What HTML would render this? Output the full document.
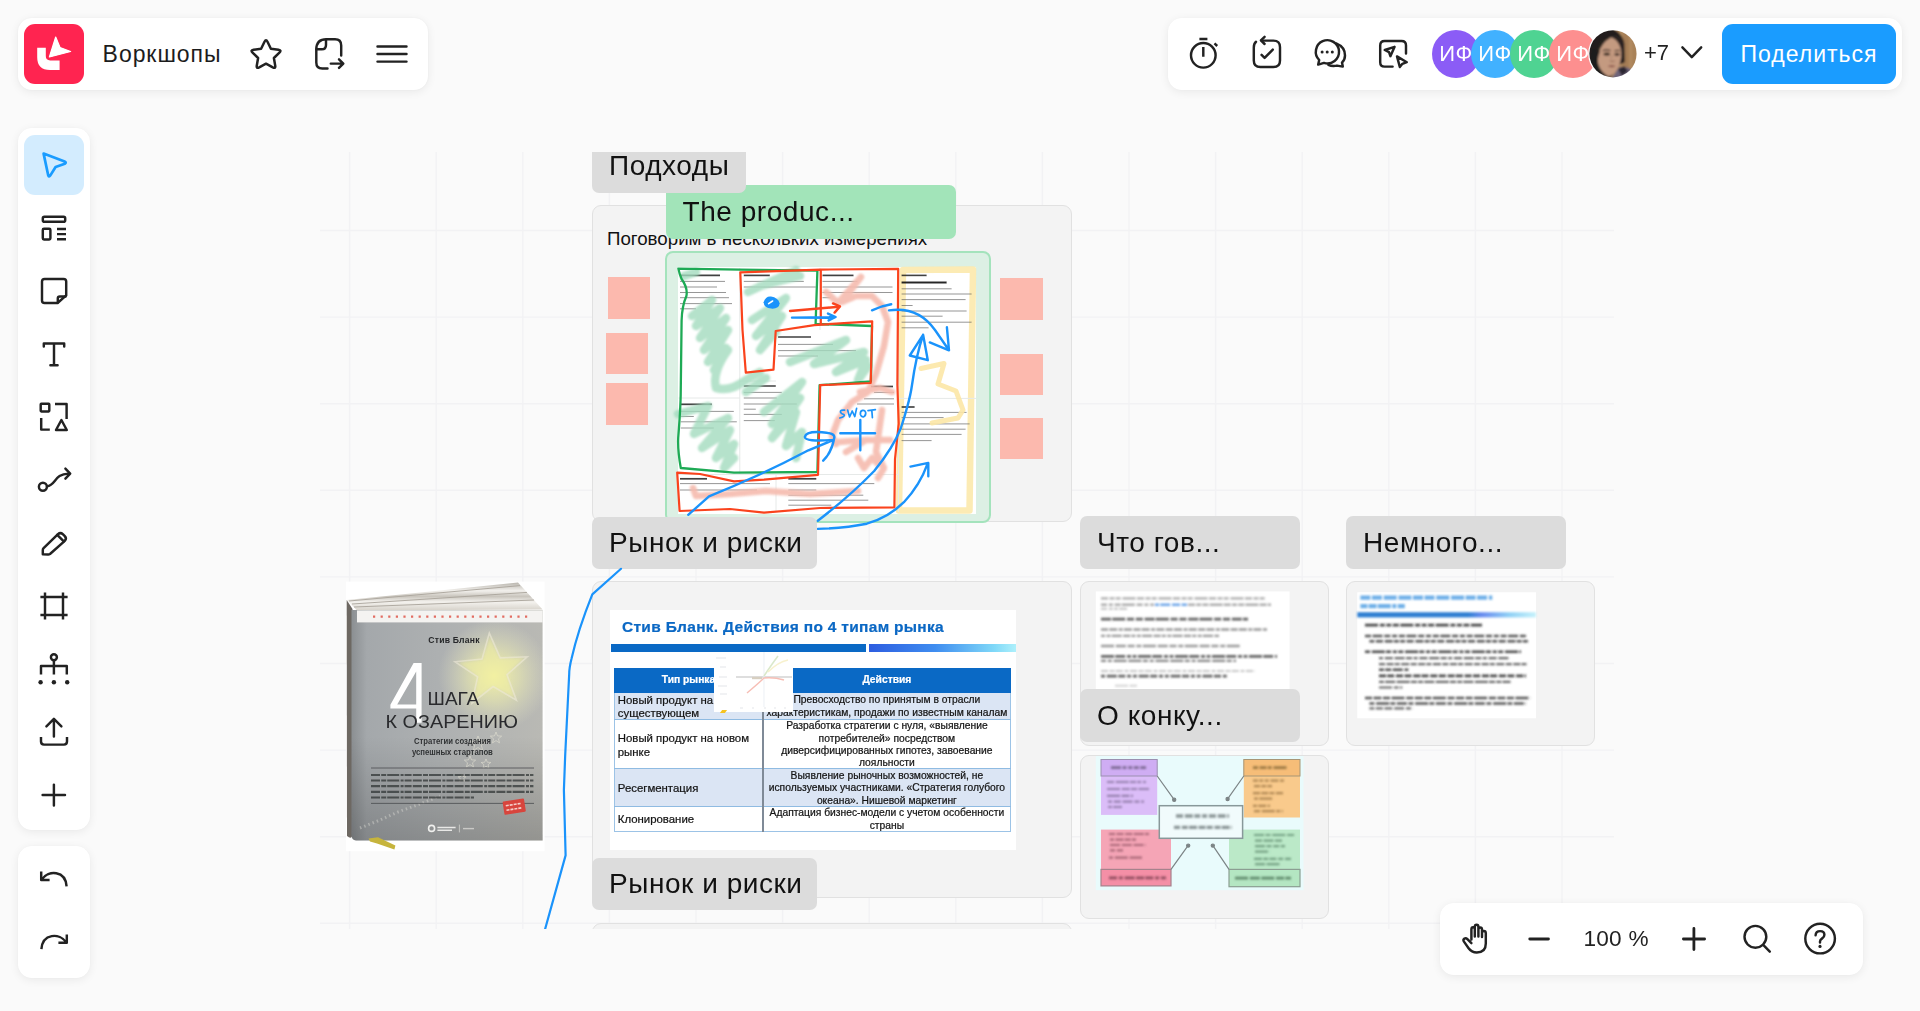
<!DOCTYPE html>
<html lang="ru">
<head>
<meta charset="utf-8">
<title>Воркшопы</title>
<style>
*{box-sizing:border-box;margin:0;padding:0}
html,body{width:1920px;height:1011px;overflow:hidden;background:#fafafa;font-family:"Liberation Sans",sans-serif;color:#1f1f1f}
.abs{position:absolute}
.panel{position:absolute;background:#fff;border-radius:14px;box-shadow:0 2px 10px rgba(0,0,0,.07),0 0 2px rgba(0,0,0,.04)}
svg{position:absolute;overflow:visible}
.ic{fill:none;stroke:#222;stroke-width:2.45;stroke-linecap:round;stroke-linejoin:round}
#canvas{position:absolute;left:320px;top:152px;width:1294px;height:777px;overflow:hidden}
#board{position:absolute;left:-320px;top:-152px;width:1920px;height:1011px}
.lbl{position:absolute;background:#dcdcdc;border-radius:7px;font-size:28px;letter-spacing:.55px;color:#111;padding-left:17px;white-space:nowrap;overflow:hidden}
.frame{position:absolute;background:#f3f3f3;border:1.5px solid #e1e1e1;border-radius:9px}
.pk{position:absolute;background:#fcb9ae;width:43px;height:43px}
.av{position:absolute;top:30px;width:48px;height:48px;border-radius:50%;color:#fff;font-size:22px;line-height:48px;text-align:center;letter-spacing:.5px}
</style>
</head>
<body>

<!-- ================= CANVAS ================= -->
<div id="canvas"><div id="board">
<svg width="1920" height="1011" style="left:0;top:0" viewBox="0 0 1920 1011"><g stroke="#f2f2f4" stroke-width="1.4"><path d="M349.6 152V929"/><path d="M436.2 152V929"/><path d="M522.8 152V929"/><path d="M609.4 152V929"/><path d="M696.0 152V929"/><path d="M782.6 152V929"/><path d="M869.2 152V929"/><path d="M955.8 152V929"/><path d="M1042.4 152V929"/><path d="M1129.0 152V929"/><path d="M1215.6 152V929"/><path d="M1302.2 152V929"/><path d="M1388.8 152V929"/><path d="M1475.4 152V929"/><path d="M1562.0 152V929"/><path d="M320 230.5H1614"/><path d="M320 317.1H1614"/><path d="M320 403.7H1614"/><path d="M320 490.3H1614"/><path d="M320 576.9H1614"/><path d="M320 663.5H1614"/><path d="M320 750.1H1614"/><path d="M320 836.7H1614"/><path d="M320 923.3H1614"/></g></svg>

<!-- frames -->
<div class="frame" style="left:592px;top:205px;width:480px;height:317px"></div>
<div class="frame" style="left:592px;top:581px;width:480px;height:317px"></div>
<div class="frame" style="left:1080px;top:581px;width:249px;height:165px"></div>
<div class="frame" style="left:1346px;top:581px;width:249px;height:165px"></div>
<div class="frame" style="left:1080px;top:755px;width:249px;height:164px"></div>
<div class="frame" style="left:592px;top:923px;width:480px;height:100px"></div>
<!--F1S--><div class="abs" style="left:607px;top:228px;font-size:18.7px;line-height:22px;color:#111;white-space:nowrap">Поговорим в нескольких измерениях</div>
<div class="pk" style="left:607.8px;top:277.4px;width:42.6px;height:41.6px"></div>
<div class="pk" style="left:605.6px;top:332.6px;width:42.6px;height:41.6px"></div>
<div class="pk" style="left:605.6px;top:383.4px;width:42.6px;height:41.6px"></div>
<div class="pk" style="left:1000.3px;top:278.2px;width:42.6px;height:41.6px"></div>
<div class="pk" style="left:1000.3px;top:353.6px;width:42.6px;height:41.6px"></div>
<div class="pk" style="left:1000.3px;top:417.8px;width:42.6px;height:41.6px"></div>
<div class="abs" style="left:665px;top:251px;width:326px;height:271.5px;border:2.2px solid #a4e3bc;background:#dcf0e4;border-radius:8px"></div>
<svg width="1920" height="1011" style="left:0;top:0" viewBox="0 0 1920 1011"><defs><filter id="b1" x="-5%" y="-5%" width="110%" height="110%"><feGaussianBlur stdDeviation=".45"/></filter><filter id="b2" x="-5%" y="-5%" width="110%" height="110%"><feGaussianBlur stdDeviation=".8"/></filter></defs><rect x="678" y="267" width="298" height="247" fill="#fff"/><path d="M903 270 L973 269.5 L969.5 510.5 L899 510.5 Z" fill="none" stroke="#fce9ae" stroke-width="6.5" stroke-linejoin="round" opacity=".92"/><path d="M739.8 268V474 M820 268V330 M898.5 268V512 M678.5 398H739.8 M739.8 381H776 M898.5 398.4H976 M678 474.5H898 M776 474.5V512" stroke="#e6e9e8" stroke-width="1" fill="none"/><g filter="url(#b1)"><path d="M680.0 275.4h40.0" stroke="#222" stroke-width="1.7" opacity="0.85" fill="none"/><path d="M680.0 281.4h45.0M680.0 287.0h37.0M680.0 292.5h46.0M680.0 297.7h49.0M680.0 303.6h52.0M680.0 308.8h16.0" stroke="#555" stroke-width="1.0" opacity="0.62" fill="none"/><path d="M743.8 275.4h26.0" stroke="#222" stroke-width="1.7" opacity="0.85" fill="none"/><path d="M743.8 281.4h60.0M743.8 287.0h72.0" stroke="#555" stroke-width="1.0" opacity="0.62" fill="none"/><path d="M822.5 275.4h31.0" stroke="#222" stroke-width="1.7" opacity="0.85" fill="none"/><path d="M822.5 281.4h35.0M822.5 287.0h70.0M822.5 292.5h70.0M822.5 297.7h8.0" stroke="#555" stroke-width="1.0" opacity="0.62" fill="none"/><path d="M901.6 275.4h25.0" stroke="#222" stroke-width="1.6" opacity="0.85" fill="none"/><path d="M901.6 282.6h45.0" stroke="#111" stroke-width="2" opacity="0.9" fill="none"/><path d="M901.6 288.8h50.0M901.6 294.0h70.0M901.6 299.6h64.0M901.6 305.5h11.0M901.6 311.0h65.0M901.6 316.2h41.0M901.6 322.2h70.0M901.6 327.8h27.0" stroke="#555" stroke-width="1.0" opacity="0.62" fill="none"/><path d="M778.0 337.0h33.0" stroke="#222" stroke-width="1.7" opacity="0.85" fill="none"/><path d="M778.0 344.4h55.0M778.0 350.6h78.0M778.0 356.0h40.0" stroke="#555" stroke-width="1.0" opacity="0.62" fill="none"/><path d="M743.8 386.0h32.0" stroke="#222" stroke-width="1.7" opacity="0.85" fill="none"/><path d="M743.8 392.4h38.0M743.8 398.0h33.0M743.8 404.0h53.0M743.8 409.2h12.0M743.8 414.4h38.0M743.8 420.6h31.0" stroke="#555" stroke-width="1.0" opacity="0.62" fill="none"/><path d="M680.8 404.3h31.0" stroke="#222" stroke-width="1.7" opacity="0.85" fill="none"/><path d="M680.8 411.4h53.0M680.8 416.5h13.0M680.8 421.8h56.0M680.8 428.0h33.0" stroke="#555" stroke-width="1.0" opacity="0.62" fill="none"/><path d="M871.0 386.5h22.0" stroke="#222" stroke-width="1.7" opacity="0.85" fill="none"/><path d="M874.0 392.4h20.0M864.0 398.8h30.0M857.0 404.0h37.0" stroke="#555" stroke-width="1.0" opacity="0.62" fill="none"/><path d="M680.0 478.8h27.0" stroke="#222" stroke-width="1.7" opacity="0.85" fill="none"/><path d="M680.0 483.6h90.0M680.0 490.0h77.0" stroke="#555" stroke-width="1.0" opacity="0.62" fill="none"/><path d="M788.3 478.8h28.0" stroke="#222" stroke-width="1.7" opacity="0.85" fill="none"/><path d="M788.3 483.6h86.0M788.3 490.0h28.0M788.3 495.2h75.0M788.3 500.2h80.0M788.3 505.2h43.0" stroke="#555" stroke-width="1.0" opacity="0.62" fill="none"/><path d="M901.6 407.0h13.0" stroke="#222" stroke-width="1.7" opacity="0.85" fill="none"/><path d="M901.6 412.4h65.0M901.6 417.6h42.0M901.6 423.9h68.0M901.6 429.2h64.0M901.6 434.4h60.0M901.6 440.6h30.0" stroke="#555" stroke-width="1.0" opacity="0.62" fill="none"/></g><g fill="none" stroke="#a3dbbe" stroke-width="8.5" stroke-linecap="round" stroke-linejoin="round" opacity=".8" filter="url(#b2)"><path d="M684 276 L696 272 M692 316 L712 300 L696 326 L720 308 L700 338 L726 318 L704 350 L728 330 L708 362 L726 348 L714 370"/><path d="M728 350 Q712 372 716 388 Q730 392 746 380 L760 372"/><path d="M748 292 L796 270 M760 286 L800 276 M752 320 L786 298 L756 336 L782 316 L760 350 L776 332"/><path d="M790 362 L846 340 L814 364 L864 352 L836 372 L866 360 L858 380 L868 366"/><path d="M746 392 L766 378 M764 412 L802 382 L772 424 L800 398 L772 438 L796 412 L786 446 L802 432 L796 458"/><path d="M678 414 L708 406 L694 434 L728 418 L702 448 L730 430 L716 458 L734 444 L724 468 L734 458"/></g><g fill="none" stroke="#f5bbae" stroke-width="6.5" stroke-linecap="round" stroke-linejoin="round" opacity=".9" filter="url(#b2)"><path d="M826 292 L838 303 L861 277 L842 302 L856 296 L872 296 L882 306 L888 322 L884 346 L876 374 L868 392 L852 402 L838 420 L832 436 L836 444"/><path d="M838 442 L866 440 L890 440 M846 452 L866 440 M882 410 L876 452 L884 468 L878 478 M858 458 L864 468 L872 458 L878 464"/><path d="M693 488 L696 496 L730 494 L766 491 L810 494 L858 491"/><path d="M860 392 L880 388 L892 392"/></g><path d="M921 368.5 L944 363.5 L938 384 L956 391 L963 410 L958 418 L932 423" fill="none" stroke="#fce7a6" stroke-width="5" stroke-linecap="round" stroke-linejoin="round" opacity=".9"/><path d="M678.4 268.6 L740 269.6 L817.4 270.6 L815.6 324 L872 326 L870.9 381.4 L819.6 385.2 L817.4 472 L734 472.6 L680.8 468 Q677.6 450 678.2 438 Q680.4 410 680.7 395 L681.6 320.5 Q682 306 686.4 296 Q688 288 681.6 279 Q679.4 274 678.4 268.6 Z" fill="none" stroke="#1eaa55" stroke-width="2.3" stroke-linejoin="round"/><path d="M740.3 272.4 L742.5 330 L745.8 372.6 L773.5 369.6 L775.7 331 L814.3 325.1 L872.2 321.4 L870.7 383 L820.2 385.2 L818 474.8 L764 479.6 L734 481.4 L700 474 L677.2 472.6 L679.6 511 L730 509 L764 512.6 L820 508 L894.4 507.4 L895 459 L898.7 423.6 L897.4 385 L898.2 268.8 L820.6 269.6 L740.3 272.4 Z M820.8 269 V325" fill="none" stroke="#fa431d" stroke-width="2.2" stroke-linejoin="round"/><g fill="none" stroke="#1a93fb" stroke-width="2.4" stroke-linecap="round" stroke-linejoin="round"><path d="M790 311 L838.5 306.8 M833 303.4 L840 306.4 L834.6 312.6" stroke="#fa431d"/><path d="M792 317.6 L834.6 317.2 M828 313.6 L835.6 317 L828.6 320.4"/><path d="M872 310.3 Q881 306 891.2 304.3"/><path d="M889 310.4 Q918 306 935 330 L949 350.3 M929.8 342.4 L949 350.3 L946.9 327.3"/><path d="M817.8 520.8 Q850 496 874.2 471 Q893 448 900.9 428 Q910 400 912 385 Q916 356 923.1 334.8 L909.8 355.5 L927.8 360.2 L923.1 334.8"/><path d="M817.8 528.9 Q846 528 866.8 523.7 Q888 518 903.9 502.2 Q920 485 927.6 463.6 M910.5 466.6 L928.3 462.9 L928.3 476.2"/><path d="M688.2 514.8 L709 496.3 Q760 476 808.4 450.3 L833.6 439.9 Q805 442 804.8 437 Q806 431 822 432.2 Q835 433 834.3 437.5 Q832 452 823.2 460.7"/><path d="M840.3 433.2 H875.1 M860.3 419.9 V450.3"/><path d="M844.6 410.2 Q840.2 409.6 840.4 412 Q841 414 844 414.6 Q845.6 416.6 839.8 418 M847.6 410 L849.6 417 L852.2 411 L854.8 416.6 L856.6 408.4 M862.6 410.4 Q860 411 860.4 414.4 Q861.4 417.4 864 416.6 Q866.2 415.4 865.6 412.2 Q864.8 410 862.6 410.4 M868 410.6 L875.4 409.6 M871.8 410.2 L872.4 417.6" stroke-width="1.7"/></g><path d="M763.6 302.2 Q765.6 296 771 296.6 Q778 297.6 779.6 303.2 Q779.2 309 771.4 308.6 Q764 308 763.6 302.2 Z" fill="#1a93fb"/><path d="M768.6 303.6 L772.6 301" stroke="#fff" stroke-width="1.6" stroke-linecap="round"/></svg>
<div class="lbl" style="left:666px;top:185px;width:289.5px;height:53.5px;line-height:53px;background:#a2e4b9;padding-left:16.5px">The produc...</div><!--F1E-->
<!--F2S--><div class="abs" style="left:610.4px;top:610.4px;width:405.4px;height:239.4px;background:#fff;filter:blur(.45px);overflow:hidden;-webkit-text-stroke:.22px">
<div class="abs" style="left:11.6px;top:8px;font-size:15.5px;letter-spacing:.3px;font-weight:bold;color:#0b68c4;white-space:nowrap;line-height:18px">Стив Бланк. Действия по 4 типам рынка</div>
<div class="abs" style="left:0.6px;top:34px;width:255px;height:7.6px;background:#0a69c5"></div>
<div class="abs" style="left:258.4px;top:34px;width:147px;height:7.6px;background:linear-gradient(90deg,#2d5de0 0%,#3f8df0 45%,#7fd8f8 85%,#aef0fb 100%)"></div>
<!-- table -->
<div class="abs" style="left:3.6px;top:57.4px;width:396.8px;height:164px;border:1px solid #9cc3e6;border-top:none"></div>
<div class="abs" style="left:3.6px;top:57.4px;width:396.8px;height:25px;background:#0a69c5"></div>
<div class="abs" style="left:4.2px;top:82.4px;width:395.6px;height:26.8px;background:#dbe5f4"></div>
<div class="abs" style="left:4.2px;top:158px;width:395.6px;height:38px;background:#dbe5f4"></div>
<div class="abs" style="left:3.6px;top:108.8px;width:396.8px;height:1.2px;background:#8fbbe2"></div>
<div class="abs" style="left:3.6px;top:157.6px;width:396.8px;height:1.2px;background:#8fbbe2"></div>
<div class="abs" style="left:3.6px;top:195.4px;width:396.8px;height:1.2px;background:#8fbbe2"></div>
<div class="abs" style="left:152px;top:82.4px;width:1.3px;height:139px;background:#7f8a97"></div>
<div class="abs" style="left:3.6px;top:63.6px;width:149px;text-align:center;font-size:10.3px;font-weight:bold;color:#fff;line-height:12px">Тип рынка</div>
<div class="abs" style="left:153px;top:63.6px;width:247px;text-align:center;font-size:10.3px;font-weight:bold;color:#fff;line-height:12px">Действия</div>
<div class="abs" style="left:7.4px;top:83.8px;font-size:11.4px;line-height:12.7px;color:#141414;white-space:nowrap">Новый продукт на<br>существующем</div>
<div class="abs" style="left:7.4px;top:121.4px;font-size:11.4px;line-height:13.8px;color:#141414;white-space:nowrap">Новый продукт на новом<br>рынке</div>
<div class="abs" style="left:7.4px;top:171.6px;font-size:11.4px;line-height:13px;color:#141414;white-space:nowrap">Ресегментация</div>
<div class="abs" style="left:7.4px;top:202.8px;font-size:11.4px;line-height:13px;color:#141414;white-space:nowrap">Клонирование</div>
<div class="abs" style="left:153px;top:84px;width:247px;text-align:center;font-size:10.3px;line-height:12.4px;color:#141414;white-space:nowrap">Превосходство по принятым в отрасли<br>характеристикам, продажи по известным каналам</div>
<div class="abs" style="left:153px;top:110px;width:247px;text-align:center;font-size:10.3px;line-height:12.35px;color:#141414;white-space:nowrap">Разработка стратегии с нуля, «выявление<br>потребителей» посредством<br>диверсифицированных гипотез, завоевание<br>лояльности</div>
<div class="abs" style="left:153px;top:159.4px;width:247px;text-align:center;font-size:10.3px;line-height:12.5px;color:#141414;white-space:nowrap">Выявление рыночных возможностей, не<br>используемых участниками. «Стратегия голубого<br>океана». Нишевой маркетинг</div>
<div class="abs" style="left:153px;top:197px;width:247px;text-align:center;font-size:10.3px;line-height:12.4px;color:#141414;white-space:nowrap">Адаптация бизнес-модели с учетом особенности<br>страны</div>
</div>
<svg width="80" height="62" style="left:714px;top:651.6px" viewBox="0 0 80 62">
<rect x="0" y="0" width="79" height="60" fill="#fff"/>
<g fill="none" stroke-width="1" opacity=".55">
<path d="M22 25 H78" stroke="#888"/><path d="M50 0 V55" stroke="#dde3ee"/>
<path d="M33 41 Q46 30 50 26 Q60 25 70 28" stroke="#f08a7a" stroke-width="1.4"/>
<path d="M50 24 Q58 12 64 4" stroke="#bcd7a0" stroke-width="1.6"/>
<path d="M54 20 Q64 10 74 8" stroke="#f1e6a6" stroke-width="1.6"/>
<path d="M38 26 H48" stroke="#b8a890" stroke-width="2.4"/>
<path d="M2 6h10M6 15h6M5 25h8M4 34h9M6 42h7" stroke="#c8ccd2" stroke-width=".9"/>
<path d="M26 56h3M38 56h2M50 56h2M60 56h2M70 56h2" stroke="#c8ccd2" stroke-width=".9"/>
</g></svg>
<div class="abs" style="left:721.4px;top:710.4px;width:5px;height:3px;background:#f6c320;transform:skewX(-35deg)"></div><!--F2E-->
<!--F3S--><svg width="1920" height="1011" style="left:0;top:0" viewBox="0 0 1920 1011"><defs>
<filter id="g1" x="-5%" y="-20%" width="110%" height="140%"><feGaussianBlur stdDeviation="1.1"/></filter>
<filter id="g2" x="-5%" y="-5%" width="110%" height="110%"><feGaussianBlur stdDeviation=".9"/></filter>
<filter id="g3" x="-5%" y="-5%" width="110%" height="110%"><feGaussianBlur stdDeviation=".6"/></filter>
<linearGradient id="f4b" x1="0" y1="0" x2="1" y2="0"><stop offset="0" stop-color="#2f7fd2"/><stop offset=".62" stop-color="#2f7fd2"/><stop offset=".7" stop-color="#6a8cf0"/><stop offset=".85" stop-color="#8fd0f5"/><stop offset="1" stop-color="#c6f2fb"/></linearGradient>
</defs><rect x="1095.8" y="591.4" width="193.8" height="110" fill="#fff"/><g filter="url(#g1)" fill="none"><path d="M1101 598.4H1265" stroke="#8a8a8a" stroke-width="2.4" opacity="0.7" stroke-dasharray="7 1.5 5 1.2 5 1.8 13 1.5"/><path d="M1101 604.8H1154" stroke="#8a8a8a" stroke-width="2.4" opacity="0.7" stroke-dasharray="6 1.8 4 1.8 6 1.2 13 1.8"/><path d="M1155 604.8H1187" stroke="#4a90e2" stroke-width="2.4" opacity="0.8" stroke-dasharray="4 1.2 10 1.8 8 1.5 10 1.2"/><path d="M1188 604.8H1271" stroke="#8a8a8a" stroke-width="2.4" opacity="0.7" stroke-dasharray="7 1.2 5 1.2 6 1.2 13 1.2"/><path d="M1101 608.8H1127" stroke="#999" stroke-width="2" opacity="0.6" stroke-dasharray="6 1.8 4 1.2 4 1.2 13 1.2"/><path d="M1101 619.1H1248" stroke="#4a4a4a" stroke-width="2.6" opacity="0.85" stroke-dasharray="10 1.2 13 1.8 7 1.8 7 1.8"/><path d="M1101 629.5H1267" stroke="#7a7a7a" stroke-width="2.4" opacity="0.75" stroke-dasharray="7 1.2 8 1.5 4 1.2 8 1.5"/><path d="M1101 635.9H1219" stroke="#7a7a7a" stroke-width="2.4" opacity="0.75" stroke-dasharray="4 1.5 4 1.2 10 1.5 7 1.2"/><path d="M1101 646H1241" stroke="#7a7a7a" stroke-width="2.4" opacity="0.75" stroke-dasharray="13 1.8 10 1.8 7 1.8 5 1.5"/><path d="M1101 656.4H1277" stroke="#4e4e4e" stroke-width="2.8" opacity="0.85" stroke-dasharray="13 1.2 10 1.8 4 1.5 4 1.5"/><path d="M1101 660.9H1236" stroke="#6a6a6a" stroke-width="2.4" opacity="0.8" stroke-dasharray="5 1.8 4 1.8 13 1.8 13 1.5"/><path d="M1101 671H1255" stroke="#9a9a9a" stroke-width="2.2" opacity="0.55" stroke-dasharray="7 1.5 5 1.2 7 1.8 4 1.5"/><path d="M1101 676.2H1227" stroke="#4e4e4e" stroke-width="2.8" opacity="0.85" stroke-dasharray="4 1.8 10 1.5 7 1.8 4 1.8"/><path d="M1115 685.8H1137" stroke="#aaa" stroke-width="2" opacity="0.5" stroke-dasharray="13 1.5 10 1.5 7 1.2 5 1.2"/></g><rect x="1357.3" y="592.3" width="178.7" height="126" fill="#fff"/><g filter="url(#g2)" fill="none"><path d="M1360.4 597.6H1492.3" stroke="#4a9be2" stroke-width="4.2" opacity="0.8" stroke-dasharray="10 1.5 10 1.8 13 1.8 13 1.5"/><path d="M1360.4 606.2H1405" stroke="#4a9be2" stroke-width="4.2" opacity="0.8" stroke-dasharray="7 1.2 8 1.2 13 1.5 4 1.5"/><rect x="1357.3" y="612.2" width="178.7" height="5.2" fill="url(#f4b)"/><path d="M1365 625.2H1482" stroke="#2a2a2a" stroke-width="2.8" opacity="0.85" stroke-dasharray="13 1.8 5 1.5 5 1.5 6 1.5"/><path d="M1365 635.9H1526" stroke="#333" stroke-width="2.5" opacity="0.82" stroke-dasharray="6 1.5 10 1.8 6 1.8 5 1.8"/><path d="M1369.4 641.3H1528.7" stroke="#333" stroke-width="2.5" opacity="0.82" stroke-dasharray="5 1.5 7 1.8 8 1.2 5 1.2"/><path d="M1365 651.7H1521" stroke="#2a2a2a" stroke-width="2.6" opacity="0.85" stroke-dasharray="5 1.8 13 1.2 5 1.8 4 1.5"/><path d="M1379 658.1H1509" stroke="#444" stroke-width="2.2" opacity="0.8" stroke-dasharray="4 1.8 8 1.8 10 1.5 6 1.5"/><path d="M1379 664.1H1527" stroke="#444" stroke-width="2.2" opacity="0.8" stroke-dasharray="6 1.5 7 1.2 5 1.5 8 1.5"/><path d="M1379 669.7H1408.4" stroke="#333" stroke-width="2.6" opacity="0.85" stroke-dasharray="5 1.2 6 1.5 10 1.8 5 1.8"/><path d="M1379 675.9H1526" stroke="#333" stroke-width="2.8" opacity="0.88" stroke-dasharray="7 1.2 7 1.8 7 1.5 7 1.8"/><path d="M1379 681.8H1510.5" stroke="#444" stroke-width="2.2" opacity="0.8" stroke-dasharray="5 1.2 10 1.5 13 1.2 6 1.2"/><path d="M1379 687.5H1402.3" stroke="#444" stroke-width="2.2" opacity="0.8" stroke-dasharray="13 1.8 5 1.2 13 1.2 13 1.8"/><path d="M1365 697.9H1530.4" stroke="#333" stroke-width="2.5" opacity="0.82" stroke-dasharray="7 1.5 8 1.5 7 1.5 13 1.8"/><path d="M1369.4 703.4H1526" stroke="#333" stroke-width="2.5" opacity="0.82" stroke-dasharray="5 1.8 13 1.2 5 1.5 10 1.5"/><path d="M1369.4 708.3H1412.7" stroke="#444" stroke-width="2.3" opacity="0.8" stroke-dasharray="5 1.5 7 1.5 8 1.8 10 1.8"/></g><g filter="url(#g3)"><rect x="1095.8" y="756" width="207.7" height="134.2" fill="#e9fbfc"/><rect x="1101" y="759.5" width="56.2" height="55.4" fill="#dbbdf8"/><rect x="1101" y="759.5" width="56.2" height="16.5" fill="#cfadf3" stroke="#9b8fb0" stroke-width="1"/><rect x="1243.8" y="759.5" width="56.2" height="58" fill="#f9ca8c"/><rect x="1243.8" y="759.5" width="56.2" height="16.5" fill="#f6bd78" stroke="#a89574" stroke-width="1"/><rect x="1101" y="829.6" width="70" height="56.3" fill="#f5a5b6"/><rect x="1101" y="869.4" width="70" height="16.5" fill="#f48fa6" stroke="#a6828c" stroke-width="1.2"/><rect x="1229" y="829.6" width="71" height="57.1" fill="#bbe9c8"/><rect x="1229" y="869.4" width="71" height="17.3" fill="#b4e6c2" stroke="#8b9e92" stroke-width="1.2"/><rect x="1159.3" y="805.7" width="83.3" height="32.6" fill="#f1fbfc" stroke="#88989a" stroke-width="1.5"/><g stroke="#7c8486" stroke-width="1.2" fill="#7c8486"><path d="M1157.2 776 L1174.5 800.2 M1243.8 776 L1227.3 799.3 M1171 869.4 L1188.4 845.2 M1229 869.4 L1212.6 845.2" fill="none"/><circle cx="1174.2" cy="799.8" r="1.6"/><circle cx="1227.6" cy="799" r="1.6"/><circle cx="1188.2" cy="845.6" r="1.6"/><circle cx="1212.8" cy="845.6" r="1.6"/></g></g><g filter="url(#g2)" fill="none"><path d="M1111 767.6H1146" stroke="#6b5a80" stroke-width="2.6" opacity="0.8" stroke-dasharray="10 1.5 4 1.8 4 1.5 5 1.5"/><path d="M1253 767.6H1287" stroke="#8a6a3a" stroke-width="2.6" opacity="0.8" stroke-dasharray="5 1.5 7 1.2 4 1.8 13 1.5"/><path d="M1107 782H1146" stroke="#7a6890" stroke-width="2.2" opacity="0.7" stroke-dasharray="7 1.8 13 1.2 6 1.2 4 1.8"/><path d="M1107 789H1149" stroke="#7a6890" stroke-width="2.2" opacity="0.7" stroke-dasharray="13 1.8 8 1.2 6 1.5 13 1.8"/><path d="M1107 795.8H1133" stroke="#7a6890" stroke-width="2.2" opacity="0.7" stroke-dasharray="13 1.5 8 1.5 8 1.2 6 1.5"/><path d="M1108 801.6H1144" stroke="#7a6890" stroke-width="2.2" opacity="0.7" stroke-dasharray="4 1.8 7 1.8 10 1.8 5 1.8"/><path d="M1108 807H1122" stroke="#7a6890" stroke-width="2.2" opacity="0.7" stroke-dasharray="4 1.2 10 1.8 4 1.8 10 1.5"/><path d="M1253 780.6H1284" stroke="#94703e" stroke-width="2.2" opacity="0.7" stroke-dasharray="5 1.2 4 1.5 4 1.8 8 1.5"/><path d="M1254 786.2H1272" stroke="#94703e" stroke-width="2.2" opacity="0.7" stroke-dasharray="6 1.2 5 1.2 7 1.5 5 1.2"/><path d="M1253 793.2H1283" stroke="#94703e" stroke-width="2.2" opacity="0.7" stroke-dasharray="7 1.2 7 1.2 5 1.5 13 1.2"/><path d="M1254 798.6H1273" stroke="#94703e" stroke-width="2.2" opacity="0.7" stroke-dasharray="4 1.2 13 1.8 7 1.5 6 1.2"/><path d="M1253 805.8H1270" stroke="#94703e" stroke-width="2.2" opacity="0.7" stroke-dasharray="4 1.2 8 1.5 6 1.2 8 1.2"/><path d="M1254 811.2H1283" stroke="#94703e" stroke-width="2.2" opacity="0.7" stroke-dasharray="6 1.8 13 1.5 4 1.5 10 1.5"/><path d="M1109 834H1149" stroke="#8a5060" stroke-width="2.2" opacity="0.7" stroke-dasharray="6 1.5 7 1.8 7 1.5 10 1.2"/><path d="M1110 839.6H1136" stroke="#8a5060" stroke-width="2.2" opacity="0.7" stroke-dasharray="4 1.5 8 1.2 6 1.2 5 1.5"/><path d="M1110 845H1146" stroke="#8a5060" stroke-width="2.2" opacity="0.7" stroke-dasharray="10 1.8 10 1.8 10 1.8 13 1.5"/><path d="M1110 850.4H1123" stroke="#8a5060" stroke-width="2.2" opacity="0.7" stroke-dasharray="5 1.8 13 1.5 7 1.8 7 1.5"/><path d="M1109 857.6H1142" stroke="#8a5060" stroke-width="2.2" opacity="0.7" stroke-dasharray="4 1.8 13 1.8 13 1.5 8 1.2"/><path d="M1254 835H1295" stroke="#5a8568" stroke-width="2.2" opacity="0.7" stroke-dasharray="10 1.5 5 1.8 13 1.8 7 1.2"/><path d="M1255 840.6H1282" stroke="#5a8568" stroke-width="2.2" opacity="0.7" stroke-dasharray="7 1.5 10 1.5 7 1.2 10 1.8"/><path d="M1255 846.2H1285" stroke="#5a8568" stroke-width="2.2" opacity="0.7" stroke-dasharray="10 1.5 5 1.8 6 1.5 8 1.5"/><path d="M1255 851.6H1270" stroke="#5a8568" stroke-width="2.2" opacity="0.7" stroke-dasharray="13 1.8 6 1.8 8 1.2 5 1.2"/><path d="M1254 858.8H1291" stroke="#5a8568" stroke-width="2.2" opacity="0.7" stroke-dasharray="8 1.2 5 1.2 7 1.8 5 1.8"/><path d="M1255 864.2H1280" stroke="#5a8568" stroke-width="2.2" opacity="0.7" stroke-dasharray="10 1.5 13 1.5 8 1.5 10 1.5"/><path d="M1109 877.8H1166" stroke="#7a4050" stroke-width="2.8" opacity="0.8" stroke-dasharray="8 1.8 4 1.8 10 1.5 8 1.2"/><path d="M1235 878.2H1291" stroke="#4d7559" stroke-width="2.8" opacity="0.8" stroke-dasharray="13 1.8 10 1.5 13 1.8 8 1.2"/><path d="M1176 816H1229" stroke="#6a7476" stroke-width="3.4" opacity="0.75" stroke-dasharray="7 1.8 8 1.5 6 1.8 5 1.8"/><path d="M1174 827.4H1232" stroke="#6a7476" stroke-width="3.4" opacity="0.75" stroke-dasharray="6 1.8 6 1.2 8 1.5 7 1.2"/></g></svg><!--F3E-->
<!--BOOKS--><svg width="1920" height="1011" style="left:0;top:0" viewBox="0 0 1920 1011"><defs>
<linearGradient id="bkc" x1="0" y1="0" x2="1" y2="0"><stop offset="0" stop-color="#8b8f92"/><stop offset=".08" stop-color="#a4a8ab"/><stop offset=".45" stop-color="#adb0b1"/><stop offset="1" stop-color="#b9b9b4"/></linearGradient>
<linearGradient id="bkd" x1="0" y1="0" x2="0" y2="1"><stop offset="0" stop-color="#000" stop-opacity="0"/><stop offset=".55" stop-color="#000" stop-opacity="0"/><stop offset="1" stop-color="#000" stop-opacity=".2"/></linearGradient>
<radialGradient id="bkg" cx="494" cy="676" r="56" gradientUnits="userSpaceOnUse"><stop offset="0" stop-color="#f6f4a4" stop-opacity=".95"/><stop offset=".45" stop-color="#eeeeb0" stop-opacity=".6"/><stop offset="1" stop-color="#e8e8c8" stop-opacity="0"/></radialGradient>
<linearGradient id="bkp" x1="0" y1="0" x2="0" y2="1"><stop offset="0" stop-color="#b9b5ad"/><stop offset=".3" stop-color="#f2f0ec"/><stop offset=".5" stop-color="#c9c5bd"/><stop offset=".7" stop-color="#f4f2ee"/><stop offset="1" stop-color="#d6d2ca"/></linearGradient>
<filter id="bb" x="-5%" y="-5%" width="110%" height="110%"><feGaussianBlur stdDeviation=".5"/></filter>
<filter id="bb2" x="-20%" y="-20%" width="140%" height="140%"><feGaussianBlur stdDeviation="1.6"/></filter>
<clipPath id="bkclip"><rect x="351.5" y="622" width="191.1" height="218.4"/></clipPath></defs><rect x="346" y="581.6" width="198.6" height="269.6" fill="#fff"/><g filter="url(#bb)"><path d="M347 600 L518 582.4 L542.6 609.6 L357 610.4 Z" fill="url(#bkp)"/><path d="M349 601 L520 585.6 M352 604 L527 592.4 M354 607 L534 600" stroke="#a9a49b" stroke-width=".9" fill="none"/><path d="M346.7 600 L352.5 609 V834 Q352 840.4 347 836 Z" fill="#6d6762"/><path d="M351.5 610 H542.6 V840.4 H356 Q351.5 840.4 351.5 835 Z" fill="url(#bkc)"/><path d="M351.5 610 H542.6 V840.4 H356 Q351.5 840.4 351.5 835 Z" fill="url(#bkd)"/><circle cx="494" cy="676" r="56" fill="url(#bkg)" clip-path="url(#bkclip)"/><path d="M489.6 636.1 L499.7 658.7 L524.5 657.9 L506.1 674.5 L514.5 697.8 L493.0 685.5 L473.5 700.7 L478.6 676.4 L458.0 662.5 L482.7 659.9Z" fill="#f3f1a0" opacity=".55" filter="url(#bb2)"/><path d="M489.3 633.1 L500.2 657.9 L527.2 656.8 L507.0 674.7 L516.4 700.1 L493.1 686.5 L471.9 703.2 L477.6 676.8 L455.1 661.8 L482.0 659.1Z" fill="none" stroke="#efe9d8" stroke-width="1.6" opacity=".6"/><path d="M478.0 736.0 L480.1 741.2 L485.6 741.5 L481.3 745.1 L482.7 750.5 L478.0 747.5 L473.3 750.5 L474.7 745.1 L470.4 741.5 L475.9 741.2Z M496.0 732.0 L497.5 735.9 L501.7 736.1 L498.5 738.8 L499.5 742.9 L496.0 740.6 L492.5 742.9 L493.5 738.8 L490.3 736.1 L494.5 735.9Z M470.0 756.0 L471.5 759.9 L475.7 760.1 L472.5 762.8 L473.5 766.9 L470.0 764.6 L466.5 766.9 L467.5 762.8 L464.3 760.1 L468.5 759.9Z M486.0 759.0 L487.3 762.2 L490.8 762.5 L488.1 764.7 L488.9 768.0 L486.0 766.2 L483.1 768.0 L483.9 764.7 L481.2 762.5 L484.7 762.2Z M462.0 774.0 L463.1 776.5 L465.8 776.8 L463.7 778.6 L464.4 781.2 L462.0 779.8 L459.6 781.2 L460.3 778.6 L458.2 776.8 L460.9 776.5Z" fill="none" stroke="#e6e4d6" stroke-width="1" opacity=".55"/><path d="M360 828 L380 820 L398 812 L420 804 L440 796" stroke="#d9d9d2" stroke-width="3" stroke-dasharray="1.5 3" opacity=".45" fill="none"/><rect x="357" y="610.4" width="185.6" height="12" fill="#f4f3f1"/><path d="M373 616.6 H532" stroke="#e0564a" stroke-width="2.2" stroke-dasharray="2.2 5.4" opacity=".85"/></g><g font-family="Liberation Sans, sans-serif" filter="url(#bb)"><text x="454" y="643" font-size="8.6" font-weight="bold" fill="#26282a" text-anchor="middle" letter-spacing=".2">Стив Бланк</text><path d="M413.6 663 L421.6 663 L421.6 722.8 L416.2 722.8 L416.2 708.6 L390.4 708.6 L390.4 704.8 Z M416.2 671.6 L397.2 704.4 L416.2 704.4 Z" fill="#fff" fill-rule="evenodd"/><text x="427.6" y="705.4" font-size="17.6" fill="#2a2c2e" textLength="51.6" lengthAdjust="spacingAndGlyphs">ШАГА</text><text x="385.6" y="727.8" font-size="18" fill="#2a2c2e" textLength="132.4" lengthAdjust="spacingAndGlyphs">К  ОЗАРЕНИЮ</text><text x="452.4" y="744.4" font-size="8.2" font-weight="bold" fill="#303234" text-anchor="middle" textLength="77" lengthAdjust="spacingAndGlyphs">Стратегии создания</text><text x="452.4" y="754.6" font-size="8.2" font-weight="bold" fill="#303234" text-anchor="middle" textLength="81" lengthAdjust="spacingAndGlyphs">успешных стартапов</text><path d="M371 768 H534 M371 803.4 H534" stroke="#4a4c4e" stroke-width=".8"/><path d="M371 775 H533.4 M371 780.5 H533.4 M371 786.1 H533.4 M371 791.8 H533.4 M371 797.5 H474" stroke="#2c2e30" stroke-width="2.2" opacity=".7" stroke-dasharray="9 1.2 5 1 12 1.4 3 1 7 1.2"/><g transform="rotate(-9 514 806.6)"><rect x="503.4" y="800" width="21.6" height="13.4" rx="1" fill="#d8443c"/><path d="M506 804.5h16M506 809h16" stroke="#f5cfc9" stroke-width="1.6" stroke-dasharray="3 1"/></g><circle cx="431.6" cy="828.4" r="3" fill="none" stroke="#f0f0ee" stroke-width="1.6"/><path d="M437.4 827.6 H455.6 M437.4 830.2 H452" stroke="#e8e8e6" stroke-width="1.5"/><path d="M459.4 824.6 V832.4" stroke="#d0d0ce" stroke-width=".8"/><path d="M463 828.6 H474" stroke="#c9c9c6" stroke-width="1.4"/></g><path d="M368.6 838.4 L378 837.2 L395.4 845.4 L394.4 849.6 L377 843.4 L370 841.6 Z" fill="#c6b43c" filter="url(#bb)"/></svg><!--BOOKE-->
<!-- labels -->
<div class="lbl" style="left:592px;top:140px;width:154px;height:53px;line-height:52px">Подходы</div>
<div class="lbl" style="left:592px;top:517px;width:225px;height:52px;line-height:51px">Рынок и риски</div>
<div class="lbl" style="left:592px;top:858px;width:225px;height:52px;line-height:52px">Рынок и риски</div>
<div class="lbl" style="left:1080px;top:516px;width:220px;height:53px;line-height:53px">Что гов...</div>
<div class="lbl" style="left:1346px;top:516px;width:220px;height:53px;line-height:53px">Немного...</div>
<div class="lbl" style="left:1080px;top:689px;width:220px;height:53px;line-height:54px">О конку...</div>
<!--LINESS--><svg width="1920" height="1011" style="left:0;top:0" viewBox="0 0 1920 1011"><path d="M621 568.8 L592.3 594.4 Q578 630 571.5 658.8 Q569.2 668 569.2 674 L565.2 755 L563.9 790 L565.6 855.4 L545 929.5" fill="none" stroke="#1a93fb" stroke-width="2.2" stroke-linecap="round" stroke-linejoin="round"/></svg><!--LINESE-->

</div></div>

<!-- ================= TOP LEFT PANEL ================= -->
<div class="panel" style="left:18px;top:18px;width:410px;height:72px"></div>
<div class="abs" style="left:24px;top:24px;width:60px;height:60px;border-radius:11px;background:#ff2450"></div>
<svg width="60" height="60" style="left:24px;top:24px" viewBox="24 24 60 60">
<path d="M37.2 47.8 H45.8 V56 Q45.8 60.4 50.2 60.4 H59.6 V70 H50 Q37.2 70 37.2 57.2 Z" fill="#fff"/>
<path d="M55.7 37 L60 47.5 L70.6 51.5 L49.4 57 Z" fill="#fff" stroke="#ff2450" stroke-width="4.2" stroke-linejoin="round" paint-order="stroke"/>
<path d="M55.7 37 L60 47.5 L70.6 51.5 L49.4 57 Z" fill="#fff" stroke="#fff" stroke-width="1.2" stroke-linejoin="round"/>
</svg>
<div class="abs" style="left:102.6px;top:41.2px;font-size:23px;letter-spacing:.95px;line-height:26px;color:#1c1c1c">Воркшопы</div>
<svg width="1920" height="1011" style="left:0;top:0" viewBox="0 0 1920 1011">
<g class="ic" stroke-width="2.5">
<path d="M264.5 41.8 Q266.0 38.8 267.5 41.8 L270.9 48.7 L278.5 49.8 Q281.8 50.3 279.4 52.6 L273.9 58.0 L275.2 65.6 Q275.8 68.8 272.8 67.3 L266.0 63.7 L259.2 67.3 Q256.2 68.8 256.8 65.6 L258.1 58.0 L252.6 52.6 Q250.2 50.3 253.5 49.8 L261.1 48.7Z" stroke-width="2.5" stroke-linejoin="round"/>
</g>
<g class="ic" stroke-width="2.5">
<path d="M327.5 68.5 H322.3 Q316.3 68.5 316.3 62.5 V49.5 Q316.3 39.3 326.5 39.3 H335 Q341.2 39.3 341.2 45.5 V55.5"/>
<path d="M316.6 49.3 H321.8 Q326 49.3 326 45 V39.6"/>
<path d="M330.8 63.6 H343 M339 59.3 L343.3 63.6 L339 67.9"/>
</g>
<g class="ic" stroke-width="2.6" stroke="#262626">
<path d="M377.5 46.4 H406.5 M377.5 54 H406.5 M377.5 61.6 H406.5"/>
</g>
</svg>

<!-- ================= LEFT TOOLBAR ================= -->
<div class="panel" style="left:18px;top:128px;width:72px;height:702px"></div>
<div class="panel" style="left:18px;top:846px;width:72px;height:132px"></div>
<div class="abs" style="left:24px;top:134.5px;width:60px;height:60.5px;border-radius:11px;background:#d3ecfe"></div>
<svg width="1920" height="1011" style="left:0;top:0" viewBox="0 0 1920 1011">
<!-- cursor -->
<path d="M43.6 153.6 L64.6 161.6 Q66.8 162.6 64.8 163.7 L55.6 167 L50.2 175.6 Q49 177.4 48.2 175.2 Z" fill="none" stroke="#1a9cff" stroke-width="2.7" stroke-linejoin="round"/>
<g class="ic" stroke-width="2.5">
<!-- templates -->
<rect x="42.8" y="216.8" width="22.4" height="5" rx="1.6"/>
<rect x="42.8" y="228.8" width="7.6" height="10.6" rx="1.2"/>
<path d="M57 228.9 H66 M57 234.1 H66 M57 239.3 H66" stroke-linecap="butt"/>
<!-- sticky -->
<path d="M57.6 303 H44.6 Q42 303 42 300.4 V281.6 Q42 279 44.6 279 H63.6 Q66.2 279 66.2 281.6 V295.4 Z"/>
<path d="M57.8 302.6 V298.4 Q57.8 296.4 59.8 296.4 H65.6"/>
<!-- T -->
<path d="M43.8 346.6 V343.4 H64.2 V346.6 M54 343.4 V365 M50.4 365.2 H57.6"/>
<!-- shapes -->
<rect x="40.7" y="403.8" width="8.6" height="7.6" rx=".6"/>
<path d="M55 403.9 H66.6 V419" stroke-linecap="butt"/>
<path d="M41.2 418 V429.6 H49.8" stroke-linecap="butt"/>
<path d="M61.4 420 L66.8 430 H56 Z"/>
<!-- connector -->
<circle cx="42.9" cy="486.8" r="4"/>
<path d="M47 486.2 C56 485.4 54 474 68.6 473.6 M65.4 468.6 L70.2 473.6 L65.4 478.6"/>
<!-- pencil -->
<path d="M42.8 554.2 V550 Q42.8 549 43.6 548.2 L58 534.2 Q60.4 532 62.8 534.2 L64.8 536.2 Q67 538.6 64.8 540.8 L50 554 Q49.2 554.5 48.2 554.5 Z"/>
<path d="M57.2 534.8 L63.8 541.4"/>
<!-- frame -->
<path d="M45 592.6 V619.6 M63 592.6 V619.6 M40.4 596.9 H67.6 M40.4 614.9 H67.6" stroke-linecap="butt"/>
<!-- mindmap -->
<circle cx="53.9" cy="657.2" r="3"/>
<path d="M53.9 660.4 V674.6 M41 674.6 V665.9 H66.8 V674.6" stroke-linecap="butt"/>
<!-- upload -->
<path d="M53.9 736.6 V719.4 M46.4 726.4 L53.9 718.9 L61.4 726.4"/>
<path d="M41 737 V741.6 Q41 744.6 44 744.6 H64 Q67 744.6 67 741.6 V737" stroke-linecap="butt"/>
<!-- plus -->
<path d="M42.6 794.9 H65 M53.9 784.6 V805.6"/>
<!-- undo -->
<path d="M41.2 871.6 V880 H49.6 M41.6 879.6 C48.5 869.6 65.5 870.6 66.6 886.4" stroke-linecap="butt"/>
<!-- redo -->
<path d="M66.8 934.4 V942.8 H58.4 M66.4 942.4 C59.5 932.4 42.5 933.4 41.4 949.2" stroke-linecap="butt"/>
</g>
<g fill="#222"><circle cx="40.6" cy="682.2" r="2.2"/><circle cx="53.9" cy="682.2" r="2.2"/><circle cx="67.2" cy="682.2" r="2.2"/></g>
</svg>

<!-- ================= TOP RIGHT PANEL ================= -->
<div class="panel" style="left:1168px;top:18px;width:734px;height:72px"></div>
<svg width="1920" height="1011" style="left:0;top:0" viewBox="0 0 1920 1011">
<g class="ic" stroke-width="2.5">
<!-- timer -->
<circle cx="1203.3" cy="55.3" r="12.3"/>
<path d="M1199.4 39 H1207.4 M1203.3 47 V56.8 M1214.5 43.4 L1217.2 46" stroke-linecap="butt"/>
<!-- check reload -->
<path d="M1261.6 40.6 H1273.4 Q1280 40.6 1280 47.2 V60.4 Q1280 67 1273.4 67 H1260.4 Q1253.8 67 1253.8 60.4 V47.4 Q1253.8 43.6 1256 41.8"/>
<path d="M1264.6 36.8 L1260.9 40.4 L1264.6 44"/>
<path d="M1261.6 54.9 L1264.6 57.9 L1272.8 49.6"/>
<!-- chat -->
<path d="M1319.2 60 A11.6 11.6 0 1 1 1324 62.9 L1318.2 64.6 Z"/>
<path d="M1336.6 43.6 Q1345 47 1345 55.4 Q1345 59.6 1342 62.6 L1342.8 66.6 L1337 65.6 Q1332 66.6 1328.4 64.8"/>
<!-- follow cursor -->
<path d="M1392.6 66.6 H1384.6 Q1380.2 66.6 1380.2 62.2 V45.4 Q1380.2 41 1384.6 41 H1401.6 Q1406 41 1406 45.4 V53.4"/>
<path d="M1394.6 46.8 L1384.8 50 L1389 52.2 L1390.4 56.2 Z"/>
<path d="M1397 56.4 L1406.8 62.2 L1402.4 63.8 L1399.8 67 Z"/>
</g>
<g fill="#222"><circle cx="1322.1" cy="51.9" r="1.5"/><circle cx="1327.2" cy="51.9" r="1.5"/><circle cx="1332.3" cy="51.9" r="1.5"/></g>
<!-- chevron -->
<path d="M1682.4 47.4 L1691.8 57.2 L1701.2 47.4" class="ic" stroke-width="2.5"/>
</svg>
<div class="av" style="left:1432px;background:#8b5cf6">ИФ</div>
<div class="av" style="left:1471px;background:#41b1ff">ИФ</div>
<div class="av" style="left:1510px;background:#4fd392">ИФ</div>
<div class="av" style="left:1549px;background:#fd8f8f">ИФ</div>
<svg width="50" height="50" style="left:1588px;top:29px" viewBox="0 0 50 50">
<defs><clipPath id="pc"><circle cx="25" cy="24.8" r="23.6"/></clipPath>
<filter id="pb" x="-20%" y="-20%" width="140%" height="140%"><feGaussianBlur stdDeviation=".9"/></filter></defs>
<circle cx="25" cy="24.8" r="24.8" fill="#fff"/>
<g clip-path="url(#pc)"><g filter="url(#pb)">
<rect x="0" y="0" width="50" height="50" fill="#b28b61"/>
<rect x="35" y="0" width="6" height="50" fill="#a57d55"/>
<rect x="44" y="0" width="6" height="50" fill="#a98259"/>
<path d="M-2 50 V8 Q6 -3 22 -1 Q32 1 36 12 L37 33 L30 36 L22 50 Z" fill="#231e1d"/>
<path d="M31 38 Q40 37 47 43 L47 52 H22 Z" fill="#6d6379"/>
<path d="M30 40 L36 37 L40 42 L34 47 Z" fill="#2a2530"/>
<path d="M11.5 24 Q12 12 20 9 Q24 8 27 9.5 Q33 13 33.2 22 Q33.6 32 30 39 Q26 46 21 47.4 Q14 45 10.5 36 Q9 30 11.5 24 Z" fill="#c49a80"/>
<path d="M10.5 25 Q13 14 23 8.6 Q17 7 12 12 Q8 18 8 26 Z" fill="#26201f"/>
<path d="M24 8.6 Q31 12 33.4 22 Q34 30 32.6 35 L36 34 L36.4 14 Q32 5 24 6 Z" fill="#2a2321"/>
<path d="M9 22 Q9 36 13 45 L5 45 Q1 30 5 18 Z" fill="#1e1a1a"/>
<ellipse cx="18.8" cy="25" rx="3.3" ry="1.5" fill="#33261f"/>
<ellipse cx="29" cy="25.4" rx="2.7" ry="1.3" fill="#40302a"/>
<path d="M14.6 21.8 Q18.6 20 22.6 21.8 M26.6 22 Q29.6 20.8 32.2 21.8" stroke="#3b2d27" stroke-width="1.2" fill="none"/>
<path d="M19.6 37 Q23.6 35.4 27.6 37 Q24 39.6 19.6 37 Z" fill="#8a5147"/>
<path d="M22 32 Q24.2 33.2 26.6 31.8" stroke="#9f745f" stroke-width="1.3" fill="none"/>
<path d="M24 26 Q23.4 29.6 22.6 31.4" stroke="#b08a72" stroke-width="1" fill="none"/>
</g></g>
</svg>
<div class="abs" style="left:1644px;top:40px;font-size:22px;line-height:26px;color:#222">+7</div>
<div class="abs" style="left:1722px;top:24px;width:174px;height:60px;border-radius:11px;background:#1a9cff;color:#fff;font-size:23px;letter-spacing:1px;line-height:60px;text-align:center">Поделиться</div>

<!-- ================= BOTTOM RIGHT PANEL ================= -->
<div class="panel" style="left:1440px;top:903px;width:423px;height:72px"></div>
<div class="abs" style="left:1583.4px;top:926px;font-size:22.6px;line-height:26px;color:#222;letter-spacing:.3px">100 %</div>
<svg width="1920" height="1011" style="left:0;top:0" viewBox="0 0 1920 1011">
<g class="ic" stroke-width="2.5">
<!-- hand -->
<path d="M1471.4 939.6 V929.4 Q1471.4 927.2 1473.1 927.2 Q1474.8 927.2 1474.8 929.4 V936.6 M1474.8 930 V927 Q1474.8 924.8 1476.6 924.8 Q1478.4 924.8 1478.4 927 V936.6 M1478.4 929.6 Q1478.4 927.4 1480.2 927.4 Q1482 927.4 1482 929.6 V937 M1482 933 Q1482 931 1483.8 931 Q1485.8 931 1485.8 933.2 V943.4 Q1485.8 952.4 1476.8 952.4 Q1471.6 952.4 1468.6 948.2 L1463.8 941.4 Q1462.8 939.6 1464.4 938.6 Q1466 937.8 1467.4 939.2 L1471.4 943.2"/>
<!-- minus -->
<path d="M1529.8 939 H1548.4" stroke-width="2.9"/>
<!-- plus -->
<path d="M1683.4 939 H1704.6 M1693.9 928.4 V949.6" stroke-width="2.8"/>
<!-- search -->
<circle cx="1755.4" cy="936.8" r="10.9"/>
<path d="M1763.2 944.8 L1769.8 951.6"/>
<!-- help -->
<circle cx="1820.1" cy="938.6" r="14.8"/>
<path d="M1815.6 935.2 Q1815.8 931.1 1820.1 931.1 Q1824.4 931.1 1824.4 934.8 Q1824.4 937 1822.2 938.4 Q1820 939.8 1820 941.4 V942.6"/>
</g>
<circle cx="1820" cy="946.4" r="1.6" fill="#222"/>
</svg>

</body>
</html>
